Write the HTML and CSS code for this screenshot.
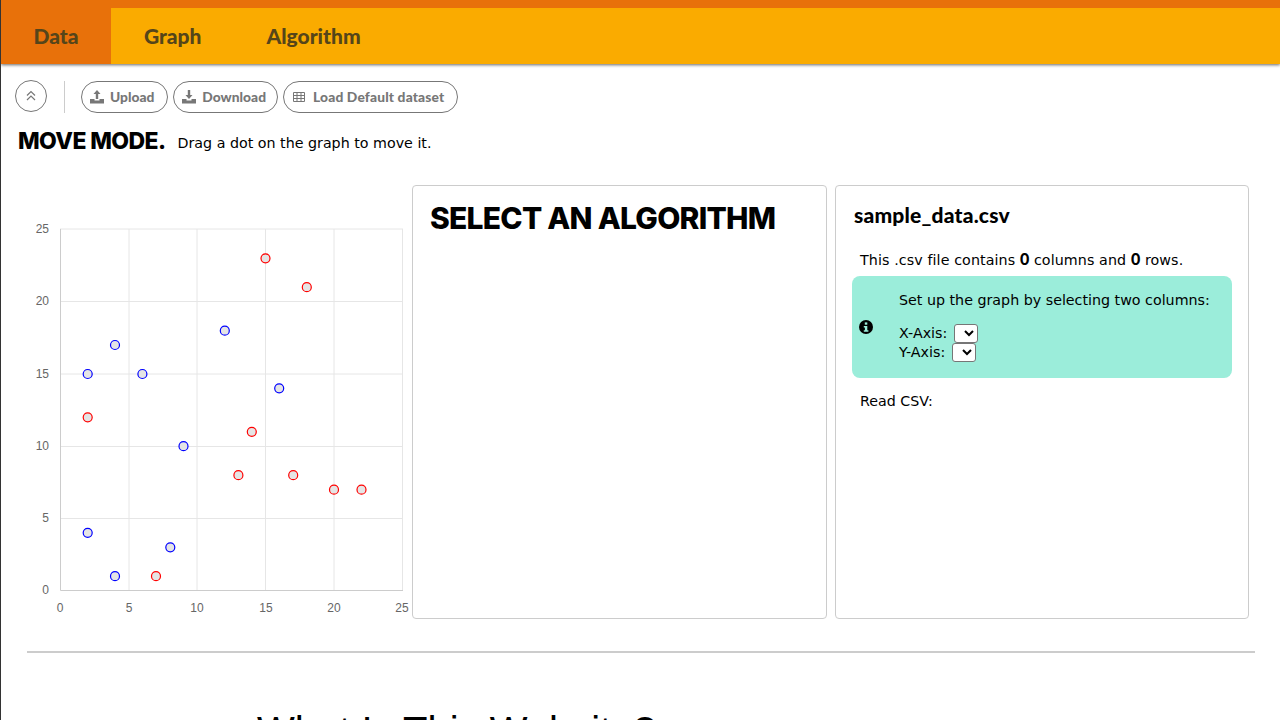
FILE: index.html
```html
<!DOCTYPE html>
<html lang="en">
<head>
  <meta charset="UTF-8">
  <meta name="viewport" content="width=device-width, initial-scale=1.0">
  <link rel="stylesheet" href="styles.css">
  <title>Data</title>
</head>
<body>
  <nav class="tabs">
    <a class="tab tab-active">Data</a>
    <a class="tab tab-graph">Graph</a>
    <a class="tab tab-algo">Algorithm</a>
  </nav>

  <div class="toolbar">
    <button class="round-btn">
      <svg width="12" height="12" viewBox="0 0 12 12" fill="none" stroke="#777" stroke-width="1.2"><path d="M2 5.500l4-4 4 4M2 10l4-4 4 4"/></svg>
    </button>
    <div class="divider"></div>
    <button class="pill">
      <svg class="pill-icon" viewBox="0 0 14 14" fill="#777"><path d="M7 0l3.500 4H8.200v5H5.800V4H3.500z"/><path d="M0 9h4.500v1.500h5V9H14v4.500H0z"/></svg>
      Upload
    </button>
    <button class="pill pill-download">
      <svg class="pill-icon" viewBox="0 0 14 14" fill="#777"><path d="M5.800 0h2.400v5h2.300L7 9 3.500 5h2.300z"/><path d="M0 9h4.500v1.500h5V9H14v4.500H0z"/></svg>
      Download
    </button>
    <button class="pill pill-load">
      <svg class="pill-icon pill-icon-wide" viewBox="0 0 14 14" fill="none" stroke="#777"><path d="M1.500 2.500h11v9h-11zM1.500 5.500h11M1.500 8.500h11M5 2.500v9M9 2.500v9"/></svg>
      Load Default dataset
    </button>
  </div>

  <div class="mode">
    <h2 class="mode-title">MOVE MODE.</h2>
    <span class="mode-text">Drag a dot on the graph to move it.</span>
  </div>

  <div class="panels">
    <svg class="chart" width="404" height="434" viewBox="0 0 404 434">
      <g class="grid">
        <path d="M129 44v361M197 44v361M265.500 44v361M334 44v361M402.500 44v361"/>
        <path d="M60 44h343M60 116.500h343M60 189h343M60 261.500h343M60 333.500h343"/>
      </g>
      <path class="axis" d="M60.500 44v361.500H403"/>
      <g class="labels-y">
        <text x="49" y="48">25</text>
        <text x="49" y="120">20</text>
        <text x="49" y="193">15</text>
        <text x="49" y="265">10</text>
        <text x="49" y="337">5</text>
        <text x="49" y="409">0</text>
      </g>
      <g class="labels-x">
        <text x="60" y="427">0</text>
        <text x="129" y="427">5</text>
        <text x="197" y="427">10</text>
        <text x="266" y="427">15</text>
        <text x="334" y="427">20</text>
        <text x="402" y="427">25</text>
      </g>
      <g class="dots-blue">
        <circle cx="87.700" cy="189" r="4.500"/>
        <circle cx="115" cy="160" r="4.500"/>
        <circle cx="142.400" cy="189" r="4.500"/>
        <circle cx="224.800" cy="145.700" r="4.500"/>
        <circle cx="279.200" cy="203.300" r="4.500"/>
        <circle cx="183.500" cy="261.200" r="4.500"/>
        <circle cx="87.700" cy="347.800" r="4.500"/>
        <circle cx="115" cy="391.200" r="4.500"/>
        <circle cx="170.300" cy="362.300" r="4.500"/>
      </g>
      <g class="dots-red">
        <circle cx="265.500" cy="73.300" r="4.500"/>
        <circle cx="306.800" cy="102.200" r="4.500"/>
        <circle cx="87.700" cy="232.300" r="4.500"/>
        <circle cx="251.800" cy="246.800" r="4.500"/>
        <circle cx="238.400" cy="290.200" r="4.500"/>
        <circle cx="293.200" cy="290.200" r="4.500"/>
        <circle cx="334" cy="304.700" r="4.500"/>
        <circle cx="361.500" cy="304.700" r="4.500"/>
        <circle cx="156" cy="391.200" r="4.500"/>
      </g>
    </svg>

    <section class="card card-algo">
      <h1 class="algo-title">SELECT AN ALGORITHM</h1>
    </section>

    <section class="card card-file">
      <h3 class="file-title">sample_data.csv</h3>
      <p class="file-line file-count">This .csv file contains <b>0</b> columns and <b>0</b> rows.</p>
      <div class="notice">
        <svg class="notice-icon" width="14" height="14" viewBox="0 0 14 14"><circle cx="7" cy="7" r="7" fill="#000"/><rect x="5.800" y="2.400" width="2.500" height="2.300" fill="#9bedda"/><path d="M4.800 6h3.500v4.200h1.100v1.500H4.800v-1.500h1.100V7.500H4.800z" fill="#9bedda"/></svg>
        <div class="notice-body">
          <p class="notice-text">Set up the graph by selecting two columns:</p>
          <div class="axis-row"><label>X-Axis:</label> <select class="axis-select"></select></div>
          <div class="axis-row"><label>Y-Axis:</label> <select class="axis-select"></select></div>
        </div>
      </div>
      <p class="file-line file-read">Read CSV:</p>
    </section>
  </div>

  <hr class="rule">
  <h1 class="about-title">What Is This Website?</h1>
</body>
</html>
```

FILE: styles.css
```css
html, body {
  height: 720px;
  overflow: hidden;
}

body {
  margin: 0;
  background-color: white;
  border-left: 1px solid #333;
  font-family: "DejaVu Sans", sans-serif;
  color: black;
}

.tabs {
  display: flex;
  height: 56px;
  background-color: #faab00;
  border-top: 8px solid #e8710a;
  box-shadow: 0 1px 3px rgba(0, 0, 0, 0.6);
  font-family: "Lato", sans-serif;
  font-size: 21px;
  font-weight: 900;
  color: #55451a;
}

.tab {
  display: flex;
  align-items: center;
  padding-bottom: 2px;
}

.tab-active {
  width: 110px;
  justify-content: center;
  background-color: #e8710a;
}

.tab-graph {
  margin-left: 33px;
}

.tab-algo {
  margin-left: 65px;
}

.toolbar {
  display: flex;
  align-items: flex-start;
  height: 33px;
  margin: 16px 0 0 14px;
}

.round-btn {
  width: 32px;
  height: 32px;
  padding: 0;
  border: 1px solid #777;
  border-radius: 50%;
  background: white;
  display: flex;
  align-items: center;
  justify-content: center;
}

.divider {
  width: 1px;
  height: 32px;
  margin: 1px 16px 0 17px;
  background-color: #ccc;
}

.pill {
  display: flex;
  align-items: center;
  height: 32px;
  padding: 0 13px 2px 8px;
  margin: 1px 5px 0 0;
  border: 1px solid #777;
  border-radius: 16px;
  background: white;
  font-family: "Lato", sans-serif;
  font-size: 13.8px;
  font-weight: 900;
  color: #777;
}

.pill-download {
  padding-right: 11px;
}

.pill-load {
  letter-spacing: 0.15px;
}

.pill-icon {
  width: 14px;
  height: 14px;
  margin: 2px 6px 0 0;
}

.pill-icon-wide {
  margin-right: 7px;
}

.mode {
  display: flex;
  align-items: flex-start;
  margin: 13px 0 0 17px;
}

.mode-title {
  margin: 0 12px 0 0;
  font-family: "Inter", sans-serif;
  font-size: 23px;
  font-weight: 800;
  letter-spacing: -0.6px;
  line-height: 30px;
}

.mode-text {
  margin-top: 8px;
  font-size: 14.25px;
  line-height: 19px;
}

.panels {
  display: flex;
  align-items: flex-start;
  margin-top: 29px;
}

.chart {
  flex: none;
  margin: 0 8px 0 -1px;
  overflow: visible;
}

.chart text {
  font-family: "Liberation Sans", sans-serif;
  font-size: 12px;
  fill: #666;
}

.grid path {
  fill: none;
  stroke: #e6e6e6;
}

.axis {
  fill: none;
  stroke: #ccc;
}

.labels-y text {
  text-anchor: end;
}

.labels-x text {
  text-anchor: middle;
}

.dots-blue circle,
.dots-red circle {
  fill: #e5e5e5;
  stroke-width: 1.2;
}

.dots-blue circle {
  stroke: #0000ff;
}

.dots-red circle {
  stroke: #ff0000;
}

.card {
  box-sizing: border-box;
  height: 434px;
  border: 1px solid #ccc;
  border-radius: 4px;
}

.card-algo {
  width: 415px;
  margin-right: 8px;
  padding: 13px 17px;
}

.algo-title {
  margin: 0;
  font-family: "Inter", sans-serif;
  font-size: 30px;
  font-weight: 800;
  letter-spacing: -0.75px;
  line-height: 38px;
}

.card-file {
  width: 414px;
  padding: 17px 16px;
}

.file-title {
  margin: 0 0 0 2px;
  font-family: "Lato", sans-serif;
  font-size: 21px;
  font-weight: 900;
  letter-spacing: 0.2px;
  line-height: 23px;
}

.file-line {
  margin: 23px 0 0 8px;
  font-size: 14.25px;
  line-height: 19px;
}

.file-count {
  letter-spacing: 0.1px;
}

.file-line b {
  font-family: "Lato", sans-serif;
  font-weight: 900;
  font-size: 16px;
}

.notice {
  display: flex;
  align-items: center;
  box-sizing: border-box;
  width: 380px;
  height: 102px;
  margin-top: 6px;
  padding-left: 7px;
  background-color: #9bedda;
  border-radius: 8px;
}

.notice-icon {
  flex: none;
  margin-right: 26px;
}

.notice-body {
  margin-top: -2px;
}

.notice-text {
  margin: 0 0 14px 0;
  font-size: 14.25px;
  line-height: 19px;
}

.axis-row {
  display: flex;
  align-items: center;
  gap: 7px;
  height: 19px;
  font-size: 14.25px;
}

.axis-select {
  width: 24px;
  height: 19px;
  padding: 0;
  background: white;
  border: 1px solid #767676;
  border-radius: 3px;
}

.file-read {
  margin-top: 14px;
}

.rule {
  margin: 32px 25px 0 26px;
  border: none;
  border-top: 2px solid #ccc;
}

.about-title {
  margin: 55px 0 0 256px;
  font-family: "Liberation Sans", sans-serif;
  font-size: 40px;
  font-weight: normal;
  line-height: 46px;
}
```
